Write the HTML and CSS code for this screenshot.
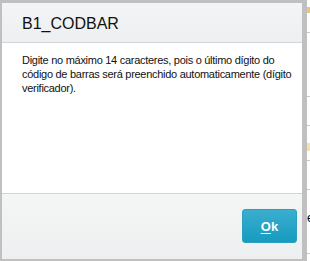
FILE: index.html
```html
<!DOCTYPE html>
<html lang="pt">
<head>
<meta charset="utf-8">
<link rel="stylesheet" href="styles.css">
</head>
<body>
<div class="page">
  <div class="dialog">
    <div class="dlg-header">
      <h1 class="dlg-title">B1_CODBAR</h1>
    </div>
    <div class="dlg-body">
      <p class="dlg-text">Digite no máximo 14 caracteres, pois o último dígito do<br>código de barras será preenchido automaticamente (dígito<br>verificador).</p>
    </div>
    <div class="dlg-footer">
      <button class="btn-ok"><u>O</u>k</button>
    </div>
  </div>
  <div class="behind">
    <div class="row r1"><span class="mark"></span></div>
    <div class="row r2"></div>
    <div class="row r3"></div>
    <div class="row r4"><span class="mark mark2"></span></div>
    <div class="row r5"></div>
    <div class="row r6"><span class="ch">e</span></div>
    <div class="row r7"></div>
  </div>
</div>
</body>
</html>
```
FILE: styles.css
```css
html, body {
  margin: 0;
  padding: 0;
  background: #ffffff;
  font-family: "Liberation Sans", Arial, sans-serif;
}

.page {
  display: flex;
  width: 310px;
  height: 261px;
  overflow: hidden;
}

.dialog {
  box-sizing: border-box;
  width: 307px;
  height: 261px;
  flex: none;
  border-style: solid;
  border-color: #c0c0c0;
  border-width: 3px 5px 2px 2px;
  display: flex;
  flex-direction: column;
  background: #ffffff;
}

.dlg-header {
  box-sizing: border-box;
  height: 40px;
  flex: none;
  background: linear-gradient(#f3f4f5, #eeeff0);
  border-bottom: 1px solid #d4d4d4;
  display: flex;
  align-items: center;
  padding: 3px 0 0 20px;
}

.dlg-title {
  margin: 0;
  font-size: 16px;
  font-weight: normal;
  color: #111111;
  line-height: 18px;
}

.dlg-body {
  flex: 1;
  padding: 10px 0 0 20px;
  border-bottom: 1px solid #d4d4d4;
  overflow: hidden;
}

.dlg-text {
  margin: 0;
  font-size: 11px;
  letter-spacing: -0.28px;
  line-height: 14px;
  color: #111111;
  white-space: nowrap;
}

.dlg-footer {
  box-sizing: border-box;
  height: 65px;
  flex: none;
  background: linear-gradient(#f4f5f5, #eeeff0);
  display: flex;
  justify-content: flex-end;
  align-items: flex-start;
  padding: 15px 5px 0 0;
}

.btn-ok {
  width: 55px;
  height: 34px;
  border: 1px solid #2b9fc0;
  border-radius: 3px;
  background: linear-gradient(#3aaece, #169bbf);
  color: #ffffff;
  font-family: "Liberation Sans", Arial, sans-serif;
  font-size: 13px;
  font-weight: bold;
  padding: 0;
}

.btn-ok u {
  text-decoration-thickness: 1px;
  text-underline-offset: 2px;
}

.behind {
  flex: 1;
  display: flex;
  flex-direction: column;
  background: #ffffff;
}

.row {
  box-sizing: border-box;
  border-bottom: 1px solid #c8c8c8;
  display: flex;
  align-items: center;
  overflow: hidden;
}

.r1 { height: 33px; }
.r2 { height: 64px; }
.r3 { height: 29px; }
.r4 { height: 35px; }
.r5 { height: 29px; }
.r6 { height: 64px; }
.r7 { flex: 1; border-bottom: none; }

.mark {
  display: block;
  width: 3px;
  height: 6px;
  background: #f2c27a;
  margin-top: -12px;
}

.mark2 {
  background: #f6e0b0;
  height: 8px;
  margin-top: 8px;
}

.ch {
  font-size: 12px;
  color: #000000;
  margin-top: -8px;
}
```
